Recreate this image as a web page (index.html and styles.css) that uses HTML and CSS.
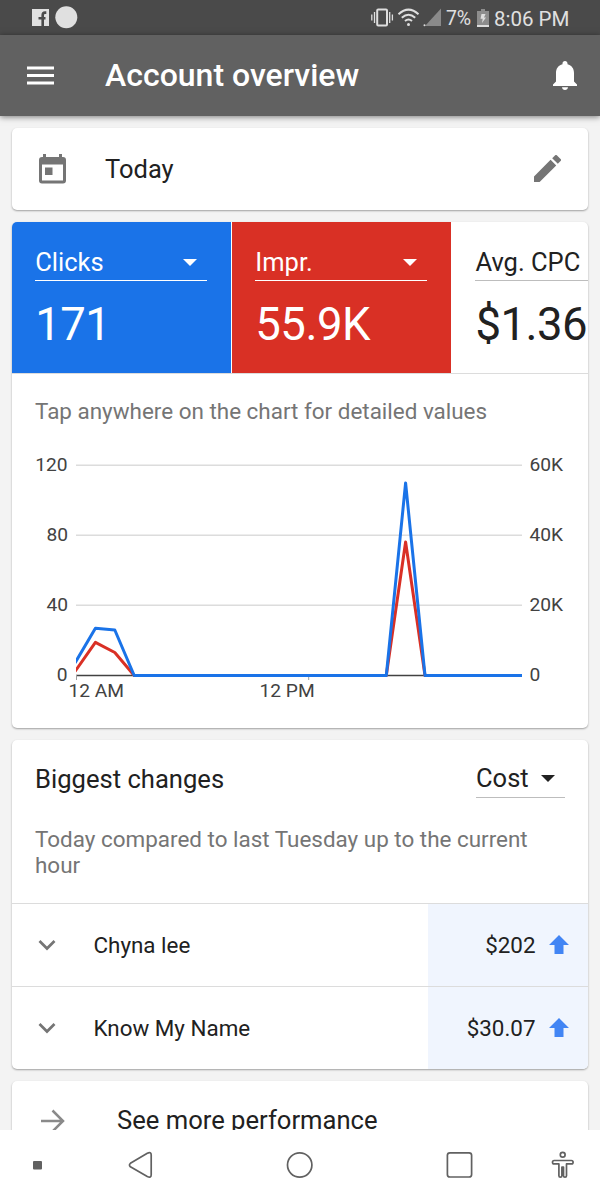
FILE: index.html
```html
<!DOCTYPE html>
<html lang="en">
<head>
<meta charset="UTF-8">
<meta name="viewport" content="width=device-width, initial-scale=1.0">
<title>Account overview</title>
<link rel="stylesheet" href="styles.css">
</head>
<body>

<div class="status-bar">
    <svg class="status-left" width="50" height="24" viewBox="30 6 50 24">
        <rect x="32" y="9" width="17" height="17" fill="#e0e0e0"/>
        <path fill="none" stroke="#4a4a4a" stroke-width="2.600" d="M46.300 12.600h-1.300q-2.300 0-2.300 2.500V26M38.500 18.200h7"/>
        <circle cx="66.300" cy="17.300" r="11" fill="#e0e0e0"/>
    </svg>
    <svg class="status-signals" width="72" height="24" viewBox="370 6 72 24">
        <g fill="none" stroke="#dedede">
            <rect x="377.200" y="9.500" width="9.800" height="16" rx="1" stroke-width="2"/>
            <path stroke-width="1.300" d="M374.500 12v11M371.800 14.500v6M389.700 12v11M392.400 14.500v6"/>
            <path stroke-width="2" d="M398.500 14.200q10-9.200 20 0M401.800 17.700q6.700-6 13.400 0M405 21q3.500-3 7 0"/>
        </g>
        <circle cx="408.500" cy="24.600" r="1.500" fill="#dedede"/>
        <path fill="#8a8a8a" d="M441 8.500V26h-16z"/>
        <circle cx="424.500" cy="25.200" r="1" fill="#dedede"/>
    </svg>
    <span class="battery-level">7%</span>
    <svg class="battery" width="12" height="18" viewBox="0 0 12 18">
        <path fill="#8d8d8d" d="M4 0h4v2h4v14H0V2h4z"/>
        <path fill="#dedede" d="M0 16h12v2H0zM4.500 5h4L7 8.500h2L5 14l.7-4.200H3.500z"/>
    </svg>
    <span class="clock">8:06 PM</span>
</div>

<div class="app-bar">
    <svg class="menu-icon" width="27" height="19" viewBox="0 0 27 19">
        <path fill="#fff" d="M0 .5h27v3H0zM0 8h27v3H0zM0 15.500h27v3H0z"/>
    </svg>
    <h1 class="title">Account overview</h1>
    <svg class="bell-icon" width="24" height="29" viewBox="0 0 24 29">
        <path fill="#fff" d="M12 0c1.500 0 2.500 1 2.500 2.500v.8c4.200 1 6.500 4.500 6.500 8.700v8.500l3 3V25H0v-1.500l3-3V12c0-4.200 2.300-7.700 6.500-8.700v-.8C9.500 1 10.500 0 12 0zM9 26.200h6c0 1.600-1.400 2.800-3 2.800s-3-1.200-3-2.800z"/>
    </svg>
</div>

<div class="content">
    <div class="card date-card">
        <svg class="calendar-icon" width="27" height="30" viewBox="0 0 27 30">
            <path fill="#757575" d="M4 0h3v3h13V0h3v3h1a3 3 0 0 1 3 3v20.500a3 3 0 0 1-3 3H3a3 3 0 0 1-3-3V6a3 3 0 0 1 3-3h1zM3 10.500v16h21v-16z"/>
            <path fill="#757575" d="M6 13.500h7.500V21H6z"/>
        </svg>
        <span class="date-label">Today</span>
        <svg class="pencil-icon" width="27" height="27" viewBox="3 3 18 18">
            <path fill="#757575" d="M3 17.250V21h3.750L17.810 9.940l-3.750-3.750L3 17.250zM20.710 7.040a1 1 0 0 0 0-1.410l-2.340-2.340a1 1 0 0 0-1.410 0l-1.830 1.830 3.750 3.750 1.830-1.830z"/>
        </svg>
    </div>

    <div class="card">
        <div class="metrics">
            <div class="metric clicks">
                <div class="metric-select">Clicks<span class="caret"></span></div>
                <div class="metric-value">171</div>
            </div>
            <div class="metric impressions">
                <div class="metric-select">Impr.<span class="caret"></span></div>
                <div class="metric-value">55.9K</div>
            </div>
            <div class="metric cpc">
                <div class="metric-select">Avg. CPC<span class="caret"></span></div>
                <div class="metric-value">$1.36</div>
            </div>
        </div>
        <p class="hint">Tap anywhere on the chart for detailed values</p>
        <svg class="chart" width="576" height="260" viewBox="12 448 576 260">
            <path class="grid" d="M76 465.300H522M76 535.300H522M76 605.300H522"/>
            <path class="axis" d="M76 675.500H522"/>
            <path class="tick" d="M76.500 675V680M308.700 675V680"/>
            <g class="axis-label left">
                <text x="67.500" y="471">120</text>
                <text x="68" y="541">80</text>
                <text x="68" y="611">40</text>
                <text x="67.500" y="681">0</text>
            </g>
            <g class="axis-label">
                <text x="529.500" y="471">60K</text>
                <text x="529.500" y="541">40K</text>
                <text x="529.500" y="611">20K</text>
                <text x="529.500" y="681">0</text>
                <text x="68.500" y="697">12 AM</text>
                <text x="259.500" y="697">12 PM</text>
            </g>
            <clipPath id="plot"><rect x="76" y="450" width="446" height="240"/></clipPath>
            <g clip-path="url(#plot)">
                <path class="line red" d="M75 671.500L95.400 642.300L114.800 652.500L134.200 675.500H386.300L405.600 542L425 675.500H522"/>
                <path class="line blue" d="M75 663L95.400 628.200L114.800 630L134.200 675.500H386.300L405.600 483L425 675.500H522"/>
            </g>
        </svg>
    </div>

    <div class="card">
        <div class="changes-header">
            <h2 class="changes-title">Biggest changes</h2>
            <div class="cost-select">Cost<span class="caret"></span></div>
        </div>
        <p class="changes-note">Today compared to last Tuesday up to the current hour</p>
        <div class="change-row">
            <svg class="chevron" width="18" height="12" viewBox="0 0 18 12"><path d="M1.500 2L9 9.500 16.500 2"/></svg>
            <span class="change-name">Chyna lee</span>
            <div class="change-value">$202
                <svg class="up-arrow" width="20" height="19" viewBox="0 0 20 19"><path d="M10 0l10 10h-5.500v9h-9v-9H0z"/></svg>
            </div>
        </div>
        <div class="change-row">
            <svg class="chevron" width="18" height="12" viewBox="0 0 18 12"><path d="M1.500 2L9 9.500 16.500 2"/></svg>
            <span class="change-name">Know My Name</span>
            <div class="change-value">$30.07
                <svg class="up-arrow" width="20" height="19" viewBox="0 0 20 19"><path d="M10 0l10 10h-5.500v9h-9v-9H0z"/></svg>
            </div>
        </div>
    </div>

    <div class="card more-card">
        <svg class="more-icon" width="24" height="24" viewBox="0 0 24 24"><path d="M0 12h22M11.500 1.500L22 12 11.500 22.500"/></svg>
        <span class="more-label">See more performance</span>
    </div>
</div>

<div class="nav-bar">
    <svg width="600" height="70" viewBox="0 1130 600 70">
        <rect x="33" y="1161" width="9" height="8.500" rx="1" fill="#616161"/>
        <g fill="none" stroke="#616161" stroke-width="1.700" stroke-linejoin="round">
            <path d="M130.400 1163.300L147.300 1153.200Q151.200 1151.400 151.200 1155V1174.700Q151.200 1178.400 147.300 1176.600L130.400 1166.800Q128.500 1165 130.400 1163.300Z"/>
            <circle cx="299.700" cy="1165" r="12.200"/>
            <rect x="447.400" y="1152.800" width="24.200" height="24.200" rx="2.500"/>
            <circle cx="562.700" cy="1154.700" r="2.400"/>
            <path d="M554.200 1160.500h17.200a1.600 1.600 0 0 1 0 3.400h-4.900v11.800a1.500 1.500 0 0 1-3 0v-8.500h-1.600v8.500a1.500 1.500 0 0 1-3 0v-11.800h-4.700a1.600 1.600 0 0 1 0-3.400z"/>
        </g>
    </svg>
</div>

</body>
</html>
```

FILE: styles.css
```css
body {
    margin: 0;
    height: 1200px;
    overflow: hidden;
    display: flex;
    flex-direction: column;
    font-family: Roboto, sans-serif;
    color: #212121;
    background-color: #f3f3f3;
}
svg {
    display: block;
    flex-shrink: 0;
}
h1, h2, p {
    margin: 0;
    font-weight: 400;
}
.status-bar {
    height: 35px;
    flex-shrink: 0;
    display: flex;
    align-items: center;
    padding-left: 30px;
    background-color: #4a4a4a;
    color: #e0e0e0;
}
.status-signals {
    margin-left: 290px;
}
.battery-level {
    margin-left: 4px;
    padding-top: 1px;
    width: 31px;
    font-size: 19.500px;
    letter-spacing: -0.3px;
}
.clock {
    margin-left: 5px;
    padding-top: 2px;
    font-size: 20.500px;
    white-space: nowrap;
}
.app-bar {
    height: 81px;
    flex-shrink: 0;
    display: flex;
    align-items: center;
    padding: 0 23px 0 27px;
    background-color: #616161;
    box-shadow: 0 1px 6px rgba(0, 0, 0, 0.5);
    z-index: 1;
}
.title {
    flex: 1;
    margin: 0 0 2px 51px;
    font-size: 32px;
    font-weight: 500;
    color: #fff;
}
.content {
    flex: 1;
    min-height: 0;
    overflow: hidden;
    display: flex;
    flex-direction: column;
    gap: 12px;
    padding: 12px 12px 0;
}
.card {
    flex-shrink: 0;
    border-radius: 5px;
    overflow: hidden;
    background-color: #fff;
    box-shadow: 0 1px 2px rgba(0, 0, 0, 0.35);
}
.date-card {
    height: 82px;
    display: flex;
    align-items: center;
    padding: 0 27px 1px 26.500px;
    box-sizing: border-box;
}
.date-label {
    flex: 1;
    margin-left: 39.500px;
    font-size: 25.500px;
}
.metrics {
    height: 151.400px;
    display: flex;
    gap: 1.500px;
    border-bottom: 1px solid #dcdcdc;
}
.metric {
    width: 218.600px;
    flex-shrink: 0;
    box-sizing: border-box;
    padding: 22px 24px 0 23.200px;
    color: #fff;
}
.clicks {
    background-color: #1a73e8;
}
.impressions {
    background-color: #d93025;
}
.cpc {
    color: #212121;
}
.metric-select {
    height: 36px;
    line-height: 37px;
    display: flex;
    align-items: center;
    justify-content: space-between;
    padding-right: 10px;
    border-bottom: 1.500px solid #fff;
    font-size: 25.500px;
    white-space: nowrap;
}
.cpc .metric-select {
    border-color: #bdbdbd;
}
.caret {
    border: 7.500px solid transparent;
    border-top-color: currentColor;
    border-bottom: 0;
}
.metric-value {
    margin-top: 18px;
    line-height: 52px;
    font-size: 45.500px;
    letter-spacing: -0.5px;
}
.hint {
    padding: 24px 23px 0;
    line-height: 26px;
    font-size: 22.450px;
    color: #757575;
}
.chart {
    margin: 23.600px 0 20px;
}
.grid, .axis, .tick {
    fill: none;
    stroke: #dcdcdc;
    stroke-width: 1.500;
}
.axis {
    stroke: #424242;
}
.tick {
    stroke: #9e9e9e;
    stroke-width: 1;
}
.axis-label {
    font-size: 19.200px;
    fill: #424242;
}
.left {
    text-anchor: end;
}
.line {
    fill: none;
    stroke-width: 3;
    stroke-linejoin: round;
}
.red {
    stroke: #d93025;
}
.blue {
    stroke: #1a73e8;
}
.changes-header {
    display: flex;
    justify-content: space-between;
    padding: 20px 23px 0;
}
.changes-title {
    line-height: 39px;
    font-size: 25.600px;
}
.cost-select {
    width: 79px;
    height: 37px;
    line-height: 37px;
    display: flex;
    align-items: center;
    justify-content: space-between;
    padding-right: 10px;
    border-bottom: 1px solid #bdbdbd;
    font-size: 25.500px;
}
.changes-note {
    padding: 27px 23px 24px;
    line-height: 26.500px;
    font-size: 22.450px;
    color: #757575;
}
.change-row {
    height: 82px;
    display: flex;
    align-items: center;
    padding-left: 26px;
    border-top: 1px solid #dcdcdc;
}
.chevron path {
    fill: none;
    stroke: #757575;
    stroke-width: 2.700;
}
.change-name {
    flex: 1;
    margin-left: 37.500px;
    font-size: 22.400px;
}
.change-value {
    width: 160px;
    height: 100%;
    box-sizing: border-box;
    display: flex;
    align-items: center;
    justify-content: flex-end;
    gap: 13.500px;
    padding-right: 19px;
    background-color: #f0f5fe;
    font-size: 22.400px;
}
.up-arrow path {
    fill: #4285f4;
}
.more-card {
    height: 80px;
    display: flex;
    align-items: center;
    padding-left: 29px;
}
.more-icon path {
    fill: none;
    stroke: #8a8a8a;
    stroke-width: 2.500;
}
.more-label {
    margin: 0 0 1px 52px;
    font-size: 25.600px;
}
.nav-bar {
    height: 70px;
    flex-shrink: 0;
    background-color: #fff;
}
```
